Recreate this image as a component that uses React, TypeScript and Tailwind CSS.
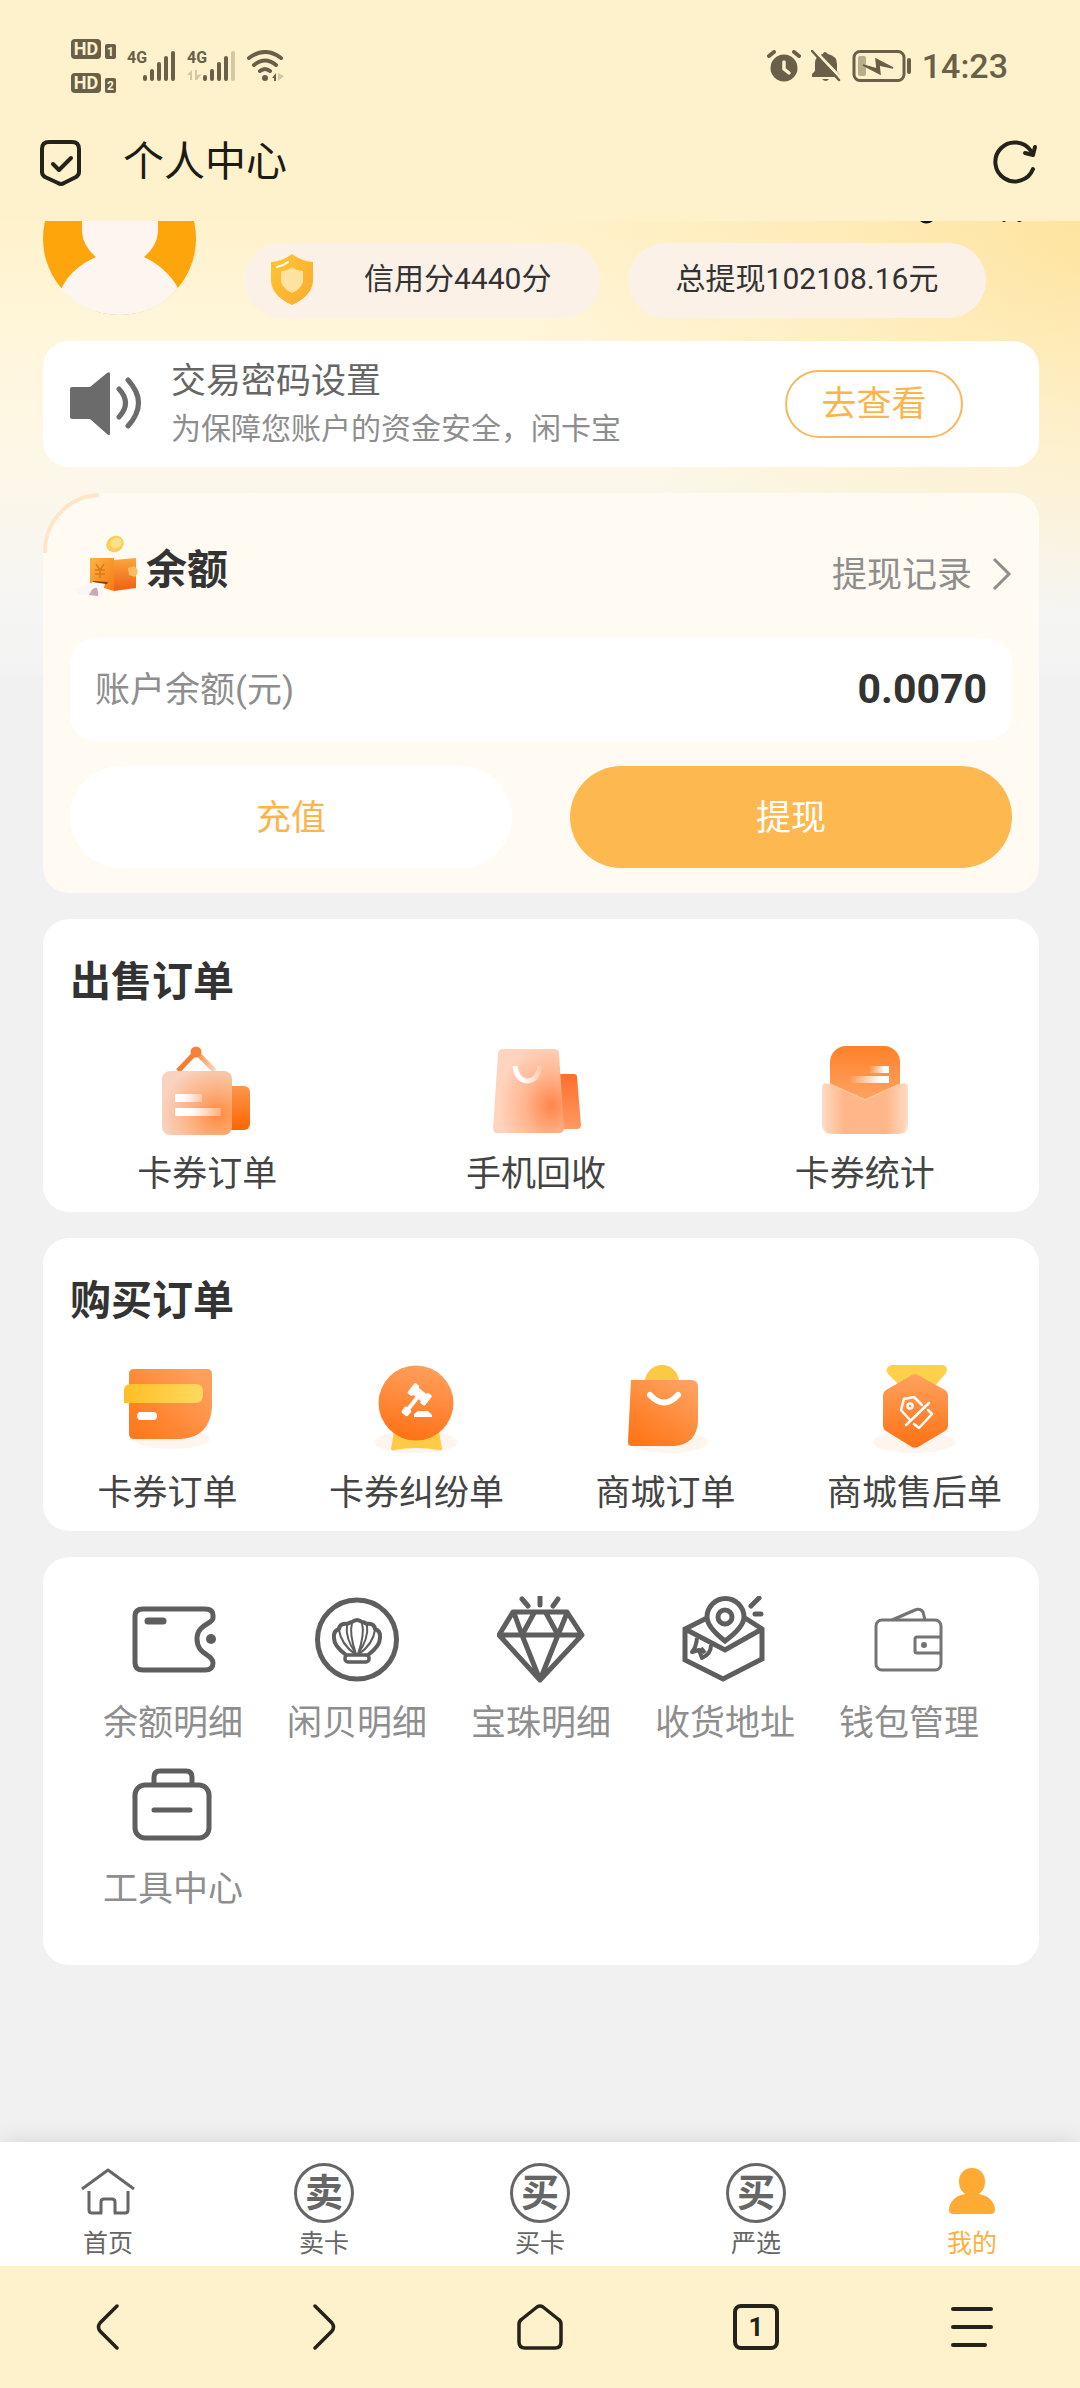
import React from "react";

const SpeakerIcon = () => (
  <svg width="72" height="66" viewBox="0 0 72 66" fill="none">
    <path d="M2 16H20L37 2Q40 0 40 3V62Q40 66 37 63L20 48H2Q0 48 0 46V18Q0 16 2 16Z" fill="#6b6b6b" />
    <path d="M49 18Q62 32 49 46M58 9Q79 32 58 55" stroke="#6b6b6b" strokeWidth="5" strokeLinecap="round" />
  </svg>
);

const Avatar = () => (
  <svg width="153" height="94" viewBox="0 59 153 94" className="shrink-0">
    <circle cx="76.500" cy="76.500" r="76.500" fill="#fea50b" />
    <path
      d="M39 59V70Q40 84 53 95Q28 106 18 127Q42 153 76.500 153Q112 153 135 126Q124 106 101 95Q114 84 115 70V59Z"
      fill="#fdf5ef"
    />
  </svg>
);

const CreditBadge = () => (
  <svg width="44" height="52" viewBox="0 0 44 52">
    <defs>
      <linearGradient id="badge" x1="0" y1="0" x2="1" y2="1">
        <stop offset="0" stopColor="#ffc62f" />
        <stop offset="1" stopColor="#fdaa33" />
      </linearGradient>
    </defs>
    <path d="M22 1Q31 8 43 9V28Q42 43 22 52Q2 43 1 28V9Q13 8 22 1Z" fill="url(#badge)" />
    <path d="M22 14Q27 18 33 18V29Q31 36 22 40Q13 36 11 29V18Q17 18 22 14Z" fill="#fee2a2" />
    <path d="M7 14Q13 13 18 9" stroke="#fff" strokeWidth="2" strokeLinecap="round" fill="none" />
  </svg>
);

const PurseIcon = () => (
  <svg width="68" height="64" viewBox="0 0 68 64">
    <defs>
      <linearGradient id="purse" x1="0" y1="0" x2="1" y2="1">
        <stop offset="0" stopColor="#fcb443" />
        <stop offset="1" stopColor="#f47a17" />
      </linearGradient>
      <linearGradient id="purseSide" x1="0" y1="0" x2="0" y2="1">
        <stop offset="0" stopColor="#fba63c" />
        <stop offset="1" stopColor="#ef5f13" />
      </linearGradient>
    </defs>
    <ellipse cx="42" cy="10" rx="9" ry="8" fill="#f9cf57" transform="rotate(-35 42 10)" />
    <ellipse cx="43" cy="9" rx="6" ry="5" fill="#fbe08a" transform="rotate(-35 43 9)" />
    <path d="M17 24H41V57L17 50Z" fill="url(#purse)" />
    <path d="M41 26L63 24V54L41 57Z" fill="url(#purseSide)" />
    <path d="M23 30L27 36L31 30M22 36H32M22 40H32M27 36V44" stroke="#dc7a17" strokeWidth="1.500" fill="none" />
    <path d="M55 34L61 32Q68 37 62 43L56 41Z" fill="#fcbd62" />
    <path d="M20 47L35 48L34 50L20 49Z" fill="#8e3d12" />
    <path d="M2 56L20 48L32 50L28 63L6 60Z" fill="#f8f6f8" />
    <path d="M16 61Q20 52 24 54Q26 58 25 62Z" fill="#c9abb0" />
  </svg>
);

const HangingSign = () => (
  <svg width="90" height="90" viewBox="0 0 90 90" fill="none">
    <defs>
      <linearGradient id="signRope" x1="14" y1="0" x2="55" y2="0" gradientUnits="userSpaceOnUse">
        <stop offset="0.400" stopColor="#fa7c30" />
        <stop offset="1" stopColor="#ffe0c8" />
      </linearGradient>
      <radialGradient id="signBody" cx="0.800" cy="0.680" r="0.800">
        <stop offset="0" stopColor="#ff8a3c" />
        <stop offset="0.500" stopColor="#fbb283" />
        <stop offset="1" stopColor="#f8d2bf" />
      </radialGradient>
      <linearGradient id="signBack" x1="0" y1="0" x2="0" y2="1">
        <stop offset="0" stopColor="#fb964c" />
        <stop offset="1" stopColor="#fd6500" />
      </linearGradient>
      <linearGradient id="signLine" x1="0" y1="0" x2="1" y2="0">
        <stop offset="0.300" stopColor="#fff" />
        <stop offset="1" stopColor="#fff" stopOpacity="0.300" />
      </linearGradient>
    </defs>
    <path d="M16 25L34 6L53 25" stroke="url(#signRope)" strokeWidth="5" />
    <circle cx="34" cy="6" r="5.500" fill="#f98038" />
    <rect x="55" y="40" width="33" height="44" rx="6" fill="url(#signBack)" />
    <rect x="0" y="25" width="70" height="64" rx="8" fill="url(#signBody)" />
    <rect x="13" y="48" width="27" height="8" rx="1" fill="url(#signLine)" />
    <rect x="13" y="62" width="46" height="8" rx="1" fill="url(#signLine)" />
  </svg>
);

const RecycleBag = () => (
  <svg width="90" height="90" viewBox="0 0 90 90" fill="none">
    <defs>
      <radialGradient id="recycleBody" cx="0.820" cy="0.680" r="0.750">
        <stop offset="0" stopColor="#ff8549" />
        <stop offset="0.500" stopColor="#ffb58f" />
        <stop offset="1" stopColor="#ffd4be" />
      </radialGradient>
      <linearGradient id="recycleBack" x1="0" y1="0" x2="0" y2="1">
        <stop offset="0" stopColor="#fd6f2c" />
        <stop offset="1" stopColor="#ff9a63" />
      </linearGradient>
      <linearGradient id="recycleSmile" x1="24" y1="0" x2="51" y2="0" gradientUnits="userSpaceOnUse">
        <stop offset="0.300" stopColor="#fff" />
        <stop offset="1" stopColor="#ffc7a6" />
      </linearGradient>
    </defs>
    <path d="M68 28H83Q86 28 86 31L90 79Q90 83 86 83H70Z" fill="url(#recycleBack)" />
    <path d="M12 3H63Q68 3 68 8L73 82Q73 87 68 87H6Q2 87 2 82L7 8Q7 3 12 3Z" fill="url(#recycleBody)" />
    <path d="M24 20Q26 35 37 35Q47 34 49 20" stroke="url(#recycleSmile)" strokeWidth="5" />
  </svg>
);

const StatsEnvelope = () => (
  <svg width="90" height="90" viewBox="0 0 90 90" fill="none">
    <defs>
      <linearGradient id="statCard" x1="0" y1="0" x2="0" y2="1">
        <stop offset="0" stopColor="#fe8128" />
        <stop offset="1" stopColor="#ffa76a" />
      </linearGradient>
      <linearGradient id="statPocket" x1="0" y1="0" x2="1" y2="0">
        <stop offset="0" stopColor="#ffdcc6" />
        <stop offset="0.250" stopColor="#ffb789" />
        <stop offset="0.750" stopColor="#ffb789" />
        <stop offset="1" stopColor="#ffdcc6" />
      </linearGradient>
      <linearGradient id="statLine" x1="0" y1="0" x2="1" y2="0">
        <stop offset="0" stopColor="#fff" stopOpacity="0" />
        <stop offset="0.800" stopColor="#fff" />
      </linearGradient>
    </defs>
    <rect x="10" y="0" width="70" height="60" rx="16" fill="url(#statCard)" />
    <rect x="49" y="20" width="20" height="7" fill="url(#statLine)" />
    <rect x="29" y="30" width="40" height="7" fill="url(#statLine)" />
    <path d="M2 40Q3 36 10 38L45 54L80 38Q87 36 88 40V78Q88 88 78 88H12Q2 88 2 78Z" fill="url(#statPocket)" />
    <path d="M10 38L45 54L80 38" stroke="#ffc79c" strokeWidth="1.500" />
  </svg>
);

const CardOrder = () => (
  <svg width="90" height="90" viewBox="0 0 90 90" fill="none">
    <defs>
      <linearGradient id="cardBody" x1="0.200" y1="1" x2="1" y2="0.300">
        <stop offset="0" stopColor="#ff7a1e" />
        <stop offset="1" stopColor="#ff9f5c" />
      </linearGradient>
      <linearGradient id="cardStripe" x1="0" y1="0" x2="1" y2="0">
        <stop offset="0" stopColor="#ffbe26" />
        <stop offset="1" stopColor="#ffd95f" />
      </linearGradient>
    </defs>
    <ellipse cx="49" cy="74" rx="38" ry="10" fill="#fff5ef" />
    <path d="M11 4H84Q89 4 89 9V42Q87 72 58 74H11Q6 74 6 69V9Q6 4 11 4Z" fill="url(#cardBody)" />
    <path d="M7 19H73Q80 19 80 27V31Q79 38 73 38H1V25Q1 20 7 19Z" fill="url(#cardStripe)" />
    <rect x="14" y="47" width="20" height="8" rx="4" fill="#fff" />
  </svg>
);

const DisputeGavel = () => (
  <svg width="90" height="90" viewBox="0 0 90 90" fill="none">
    <defs>
      <linearGradient id="gavelDisc" x1="0.600" y1="0" x2="0.400" y2="1">
        <stop offset="0" stopColor="#ffa05c" />
        <stop offset="1" stopColor="#ff7115" />
      </linearGradient>
    </defs>
    <ellipse cx="44" cy="77" rx="42" ry="11" fill="#fff5ef" />
    <path d="M22 66H67L70 84Q70 86 67 85Q44 81 22 85Q19 86 19 84Z" fill="#ffca45" />
    <circle cx="44" cy="38" r="37.500" fill="url(#gavelDisc)" />
    <g fill="#fff" transform="rotate(38 48 29)">
      <rect x="40" y="25" width="16" height="9" />
      <rect x="37" y="23" width="6" height="13" rx="1.500" />
      <rect x="53" y="23" width="6" height="13" rx="1.500" />
      <rect x="46" y="33" width="4" height="17" />
      <rect x="44" y="47" width="8" height="8" rx="2" />
    </g>
    <path d="M46 46H56L60 50V52H42V49Z" fill="#fff" />
  </svg>
);

const MallBag = () => (
  <svg width="90" height="90" viewBox="0 0 90 90" fill="none">
    <defs>
      <linearGradient id="mallBag" x1="0.300" y1="1" x2="0.900" y2="0.100">
        <stop offset="0" stopColor="#ff7719" />
        <stop offset="1" stopColor="#ffa15e" />
      </linearGradient>
    </defs>
    <ellipse cx="48" cy="77" rx="39" ry="11" fill="#fff5ef" />
    <circle cx="41" cy="17" r="17" fill="#fcc945" />
    <path d="M10 15H70Q77 15 77 22V56Q76 79 53 81H11Q7 81 7 77Z" fill="url(#mallBag)" />
    <path d="M29 30Q43 45 57 30" stroke="#fff" strokeWidth="6" strokeLinecap="round" />
  </svg>
);

const AfterSaleMedal = () => (
  <svg width="90" height="90" viewBox="0 0 90 90" fill="none">
    <defs>
      <linearGradient id="medal" x1="0" y1="0" x2="0" y2="1">
        <stop offset="0" stopColor="#ffa25f" />
        <stop offset="1" stopColor="#ff7113" />
      </linearGradient>
    </defs>
    <ellipse cx="44" cy="77" rx="41" ry="11" fill="#fff5ef" />
    <path d="M21 0H73Q79 2 76 8L64 22H31L18 9Q14 3 21 0Z" fill="#ffd04c" />
    <path
      d="M42 10Q45 8 48 10L75 25Q78 27 78 30V61Q78 64 75 66L48 82Q45 83 42 82L16 66Q13 64 13 61V30Q13 27 16 25Z"
      fill="url(#medal)"
    />
    <g stroke="#fff" strokeWidth="2.500" strokeLinecap="round" strokeLinejoin="round">
      <path d="M52 40L44 32L34 34L31 45L39 54M59 38L36 60M58 45L62 49L49 63L44 59" />
      <circle cx="40" cy="41" r="2.500" />
    </g>
  </svg>
);

const BalanceIcon = () => (
  <svg width="88" height="88" viewBox="0 0 88 88" fill="none" stroke="#5e5e5e" strokeWidth="5" strokeLinecap="round">
    <path d="M14 13H76Q84 13 84 19V22C84 28 68 28 68 43C68 59 84 58 84 67Q84 74 76 74H14Q6 74 6 67V20Q6 13 14 13Z" />
    <path d="M19 25H34" strokeWidth="7" />
    <circle cx="82" cy="43" r="5" fill="#5e5e5e" stroke="none" />
  </svg>
);

const ShellIcon = () => (
  <svg width="88" height="88" viewBox="0 0 88 88" fill="none" stroke="#5e5e5e" strokeLinecap="round" strokeLinejoin="round">
    <circle cx="44" cy="43.500" r="39.500" strokeWidth="5" />
    <path
      d="M33 59Q21 50 21 42Q20 35 26 33Q27 27 34 28Q38 26 39 26Q44 22 49 26Q51 26 54 28Q61 27 62 33Q68 35 67 42Q67 50 55 59"
      strokeWidth="4"
    />
    <path d="M42 58Q28 48 26 34M43 58Q32 42 34 29M43 58Q36 38 39 27M45 58Q52 38 49 27M45 58Q56 42 54 29M46 58Q60 48 62 34" strokeWidth="2" />
    <rect x="32" y="59" width="24" height="7" rx="3" strokeWidth="3.500" />
  </svg>
);

const DiamondIcon = () => (
  <svg width="88" height="88" viewBox="0 0 88 88" fill="none" stroke="#5e5e5e" strokeWidth="5">
    <path d="M16 16H70L85 39L43 84L2 39ZM2 39H85M17 17L25 39L37 17M49 17L61 39L70 17M25 39L43 84L61 39" strokeLinejoin="round" />
    <path d="M25 3L31 10M43 1V9M61 3L56 10" strokeLinecap="round" />
  </svg>
);

const AddressIcon = () => (
  <svg width="88" height="88" viewBox="0 0 88 88" fill="none" stroke="#5e5e5e" strokeWidth="5">
    <path d="M26 22L4 33V64L42 83L81 63V33L64 22M4 33L44 54L81 33" />
    <path d="M44 45Q26 31 26 21A18 18 0 0 1 63 21Q63 31 44 45Z" />
    <circle cx="44" cy="21" r="7" />
    <path d="M16 42Q15 52 11 56L18 54L21 62Q30 58 30 49M20 52L24 57" strokeWidth="4" strokeLinejoin="round" />
    <path d="M78 2L70 10M74 18H80" strokeLinecap="round" />
  </svg>
);

const WalletIcon = () => (
  <svg width="88" height="88" viewBox="0 0 88 88" fill="none" stroke="#747474" strokeWidth="3">
    <rect x="11" y="24" width="65" height="50" rx="6" />
    <path d="M27 24L50 14Q55 12 58 16L60 24M76 41H52Q50 41 50 43V55Q50 57 52 57H76" />
    <circle cx="59" cy="49" r="3" fill="#747474" stroke="none" />
  </svg>
);

const ToolboxIcon = () => (
  <svg width="88" height="88" viewBox="0 0 88 88" fill="none" stroke="#5e5e5e" strokeWidth="5" strokeLinecap="round">
    <rect x="6" y="23" width="74" height="53" rx="10" />
    <path d="M25 22V15Q25 9 31 9H57Q63 9 63 15V22M25 48H61" />
  </svg>
);

const sellOrders = [
  { label: "卡券订单", icon: <HangingSign /> },
  { label: "手机回收", icon: <RecycleBag /> },
  { label: "卡券统计", icon: <StatsEnvelope /> },
];

const buyOrders = [
  { label: "卡券订单", icon: <CardOrder /> },
  { label: "卡券纠纷单", icon: <DisputeGavel /> },
  { label: "商城订单", icon: <MallBag /> },
  { label: "商城售后单", icon: <AfterSaleMedal /> },
];

const tools = [
  { label: "余额明细", icon: <BalanceIcon /> },
  { label: "闲贝明细", icon: <ShellIcon /> },
  { label: "宝珠明细", icon: <DiamondIcon /> },
  { label: "收货地址", icon: <AddressIcon /> },
  { label: "钱包管理", icon: <WalletIcon /> },
  { label: "工具中心", icon: <ToolboxIcon /> },
];

const CircleGlyph = ({ char }: { char: string }) => (
  <span className="flex size-[60px] items-center justify-center rounded-full border-3 border-[#666] text-[38px] leading-none font-bold">
    {char}
  </span>
);

const tabs = [
  {
    label: "首页",
    icon: (
      <svg width="60" height="60" viewBox="0 0 60 60" fill="none" stroke="#666" strokeWidth="3" strokeLinejoin="round">
        <path d="M4 26L30 7L56 26M11 28V47Q11 50 14 50H23V39Q23 36 26 36H34Q37 36 37 39V50H47Q50 50 50 47V28" />
      </svg>
    ),
  },
  { label: "卖卡", icon: <CircleGlyph char="卖" /> },
  { label: "买卡", icon: <CircleGlyph char="买" /> },
  { label: "严选", icon: <CircleGlyph char="买" /> },
  {
    label: "我的",
    active: true,
    icon: (
      <svg width="60" height="60" viewBox="0 0 60 60" fill="#feaa33">
        <path d="M30 5C38 5 43 11 43 18C43 24 41 28 37 31C48 33 53 40 53 47Q53 51 48 51H12Q7 51 7 47C7 40 12 33 23 31C19 28 17 24 17 18C17 11 22 5 30 5Z" />
      </svg>
    ),
  },
];

const SignalBars = ({ weak }: { weak?: boolean }) => (
  <svg width="49" height="32" viewBox="0 0 49 32" fill="#6a5f48">
    {weak && <path d="M0 25L5 20V30H3V25ZM8 20H10V25L15 24L10 30H8Z" fill="#d3c8a4" />}
    <rect x="16" y="25" width="4" height="6" rx="2" />
    <rect x="23" y="19" width="4" height="12" rx="2" />
    <rect x="30" y="12" width="4" height="19" rx="2" />
    <rect x="37" y="6" width="4" height="25" rx="2" />
    <rect x="44" y="1" width="4" height="30" rx="2" fill={weak ? "#d3c8a4" : "#6a5f48"} />
  </svg>
);

const Network = ({ weak }: { weak?: boolean }) => (
  <div className="relative">
    <span className="absolute top-0 left-0 text-base leading-4 font-bold">4G</span>
    <SignalBars weak={weak} />
  </div>
);

const HdBadge = ({ sim }: { sim: number }) => (
  <div className="flex items-end gap-1">
    <span className="flex h-5 w-[30px] items-center justify-center rounded-sm bg-[#6a5f48] text-lg leading-none font-bold text-[#fef2cc]">
      HD
    </span>
    <span className="flex h-[15px] w-[11px] items-center justify-center rounded-xs bg-[#6a5f48] text-xs leading-none font-bold text-[#fef2cc]">
      {sim}
    </span>
  </div>
);

const StatusBar = () => (
  <div className="flex h-[76px] items-center justify-between pr-[72px] pl-[71px] text-[#6a5f48]">
    <div className="flex items-center gap-[11px]">
      <div className="flex flex-col gap-[14px]">
        <HdBadge sim={1} />
        <HdBadge sim={2} />
      </div>
      <Network />
      <Network weak />
      <svg width="38" height="32" viewBox="0 0 38 32" fill="none" stroke="#6a5f48" strokeWidth="4" strokeLinecap="round">
        <path d="M2 8Q18 -4 34 8M7 15Q18 6 29 15M13 21Q18 17 23 21" />
        <circle cx="18" cy="28" r="3" fill="#6a5f48" stroke="none" />
        <path d="M25 28L29 23V31H27V28Z" fill="#6a5f48" stroke="none" />
        <path d="M31 23V31L37 26Z" fill="#d3c8a4" stroke="none" />
      </svg>
    </div>
    <div className="flex items-center gap-[10px]">
      <svg width="34" height="32" viewBox="0 0 34 32" fill="none" strokeLinecap="round">
        <circle cx="17" cy="18" r="13.500" fill="#6a5f48" />
        <path d="M2 6L7 2M32 6L27 2" stroke="#6a5f48" strokeWidth="4" />
        <path d="M17 12V19L22 23" stroke="#fef2cc" strokeWidth="3.500" />
      </svg>
      <svg width="30" height="32" viewBox="0 0 30 32">
        <path d="M1 27V24L4 21V13Q4 6 12 4Q13 0 17 4Q26 6 26 14V21L29 25V27ZM11 29H18Q15 33 11 29Z" fill="#6a5f48" />
        <path d="M3 0L31 29" stroke="#fef2cc" strokeWidth="3" />
        <path d="M1 1L28 30" stroke="#6a5f48" strokeWidth="2.500" strokeLinecap="round" />
      </svg>
      <svg width="61" height="32" viewBox="0 0 61 32" fill="none">
        <rect x="3" y="1.500" width="50" height="29" rx="6" stroke="#6a5f48" strokeWidth="3" />
        <rect x="7" y="6" width="8" height="20" rx="2" fill="#b9ae8c" />
        <path d="M12 15L26 19L25 9L42 18L28 15L29 24Z" fill="#6a5f48" stroke="#6a5f48" strokeWidth="1.500" />
        <rect x="56" y="8" width="4" height="16" rx="2" fill="#6a5f48" />
      </svg>
      <span className="text-[34px] leading-none font-medium">14:23</span>
    </div>
  </div>
);

const SectionCard = ({ title, children }: { title: string; children: React.ReactNode }) => (
  <section className="rounded-[26px] bg-white pt-[33px] pb-[13px]">
    <h2 className="px-[27px] text-[41px] leading-[60px] font-bold text-[#333]">{title}</h2>
    <div className="mt-[34px] flex">{children}</div>
  </section>
);

const OrderLink = ({ item, width }: { item: { label: string; icon: React.ReactNode }; width: string }) => (
  <a href="#" className={`flex flex-col items-center gap-[15px] ${width}`}>
    {item.icon}
    <span className="text-[35px] leading-12 whitespace-nowrap text-[#444]">{item.label}</span>
  </a>
);

const App = () => {
  return (
    <div className="flex min-h-screen flex-col bg-[#f1f1f1] font-[Roboto,'Noto_Sans_CJK_SC',sans-serif]">
      {/* Browser header */}
      <header className="bg-[#fef2cc] pt-7">
        <StatusBar />
        <div className="flex h-[117px] items-center pr-[42px] pl-[39px]">
          <svg width="44" height="48" viewBox="0 0 44 48" fill="none" stroke="#25221a" strokeWidth="4" strokeLinecap="round" strokeLinejoin="round">
            <path d="M10 3H33Q40 3 40 10V33Q40 36 37 38L25 44Q22 46 19 44L6 38Q3 36 3 33V10Q3 3 10 3Z" />
            <path d="M14 25L20 31L32 19" />
          </svg>
          <h1 className="ml-10 flex-1 text-[41px] leading-none text-[#1d1b14]">个人中心</h1>
          <button aria-label="刷新">
            <svg width="46" height="46" viewBox="0 0 46 46" fill="none" stroke="#25221a" strokeWidth="4" strokeLinecap="round" strokeLinejoin="round">
              <path d="M41 29A19.500 19.500 0 1 1 39 11" />
              <path d="M43 7L41 15L33 13" />
            </svg>
          </button>
        </div>
      </header>

      <main className="flex-1 bg-[image:radial-gradient(ellipse_620px_400px_at_104%_0%,rgba(253,218,130,0.65),rgba(253,225,150,0.35)_50%,transparent),linear-gradient(#fff2cc,#fff6dc_28%,#fcf7e8_55%,#f5f5f4_85%,#f3f3f3)] bg-[length:100%_455px] bg-no-repeat pr-[41px] pb-6 pl-[43px]">
        {/* Profile, scrolled partly under the header */}
        <div className="relative flex h-[120px]">
          <Avatar />
          <div className="mt-[22px] ml-12 flex h-[75px] gap-7 text-[30px] whitespace-nowrap text-[#333]">
            <div className="flex w-[356px] items-center rounded-full bg-[#fbf1e7] pb-1 pl-[26px]">
              <CreditBadge />
              <span className="ml-[50px]">信用分4440分</span>
            </div>
            <div className="flex w-[358px] items-center justify-center rounded-full bg-[#fbf1e7] pb-1">总提现102108.16元</div>
          </div>
          <svg className="absolute top-0 right-[14px]" width="106" height="4" viewBox="0 0 106 4">
            <path d="M1 0H14Q7 5 1 0ZM83 0H87Q85 2 83 0ZM98 0H103Q100 2 98 0Z" fill="#111" />
          </svg>
        </div>

        <div className="flex flex-col gap-[26px]">
          <section className="flex h-[126px] items-center rounded-[26px] bg-white pr-[76px] pl-[27px]">
            <SpeakerIcon />
            <div className="ml-[29px] flex-1 whitespace-nowrap">
              <h2 className="pt-[2px] text-[35px] leading-12 text-[#666]">交易密码设置</h2>
              <p className="text-[30px] leading-[46px] text-[#8e8e8e]">为保障您账户的资金安全，闲卡宝</p>
            </div>
            <button className="h-[68px] w-[178px] rounded-full border-2 border-[#fbb75c] text-[35px] leading-none text-[#fdb54a]">
              去查看
            </button>
          </section>

          {/* Balance */}
          <section className="relative rounded-[26px] rounded-tl-[56px] bg-[#fffaf2] px-[27px] pb-[25px]">
            <svg className="absolute top-0 left-0" width="60" height="66" viewBox="0 0 60 66" fill="none">
              <path d="M2 60A56 56 0 0 1 56 2" stroke="#ffe6cb" strokeWidth="4" />
            </svg>
            <div className="flex h-[145px] items-center pl-[3px]">
              <PurseIcon />
              <h2 className="ml-[5px] flex-1 pt-2 text-[41px] leading-[60px] font-bold text-[#333]">余额</h2>
              <a href="#" className="flex items-center gap-5 pt-4 text-[35px] leading-12 text-[#8e8e8e]">
                <span className="pt-1">提现记录</span>
                <svg width="20" height="34" viewBox="0 0 20 34" fill="none" stroke="#8e8e8e" strokeWidth="3">
                  <path d="M2 2L17 17L2 32" />
                </svg>
              </a>
            </div>
            <div className="flex h-[103px] items-center justify-between rounded-[26px] bg-white px-[25px]">
              <span className="pt-1 text-[35px] text-[#8e8e8e]">账户余额(元)</span>
              <span className="text-[41px] font-bold text-[#333]">0.0070</span>
            </div>
            <div className="mt-[25px] grid grid-cols-2 gap-[58px] text-[35px]">
              <button className="h-[102px] rounded-full bg-white pt-1 text-[#fdb54a]">充值</button>
              <button className="h-[102px] rounded-full bg-[#feb850] pt-1 text-white">提现</button>
            </div>
          </section>

          <SectionCard title="出售订单">
            {sellOrders.map((item) => (
              <OrderLink key={item.label} item={item} width="w-[33%]" />
            ))}
          </SectionCard>

          <SectionCard title="购买订单">
            {buyOrders.map((item) => (
              <OrderLink key={item.label} item={item} width="w-1/4" />
            ))}
          </SectionCard>

          <section className="grid grid-cols-5 gap-y-[14px] rounded-[26px] bg-white px-[38px] pt-[39px] pb-[51px]">
            {tools.map((item) => (
              <a key={item.label} href="#" className="flex flex-col items-center gap-4">
                {item.icon}
                <span className="text-[35px] leading-12 whitespace-nowrap text-[#8e8e8e]">{item.label}</span>
              </a>
            ))}
          </section>
        </div>
      </main>

      {/* App tabs */}
      <nav className="relative grid h-[124px] grid-cols-5 bg-white pt-[21px] shadow-[0_0_24px_rgba(0,0,0,0.12)]">
        {tabs.map((tab) => (
          <a
            key={tab.label}
            href="#"
            className={`flex flex-col items-center ${tab.active ? "text-[#feb040]" : "text-[#666]"}`}
          >
            {tab.icon}
            <span className="text-[25px] leading-[42px]">{tab.label}</span>
          </a>
        ))}
      </nav>

      {/* Browser toolbar */}
      <footer className="relative grid h-[122px] grid-cols-5 place-items-center bg-[#fef2cc] text-[#25221a]">
        <button aria-label="后退">
          <svg width="24" height="48" viewBox="0 0 24 48" fill="none" stroke="currentColor" strokeWidth="3.500" strokeLinecap="round">
            <path d="M21 3L4 20Q1 24 4 28L21 45" />
          </svg>
        </button>
        <button aria-label="前进">
          <svg width="24" height="48" viewBox="0 0 24 48" fill="none" stroke="currentColor" strokeWidth="3.500" strokeLinecap="round">
            <path d="M3 3L20 20Q23 24 20 28L3 45" />
          </svg>
        </button>
        <button aria-label="主页">
          <svg width="46" height="48" viewBox="0 0 46 48" fill="none" stroke="currentColor" strokeWidth="3.500" strokeLinejoin="round">
            <path d="M20 4Q23 2 26 4L41 16Q44 18 44 21V39Q44 45 38 45H8Q2 45 2 39V21Q2 18 5 16Z" />
          </svg>
        </button>
        <button className="flex size-[46px] items-center justify-center rounded-lg border-4 border-[#25221a] text-[26px] leading-none font-bold">
          1
        </button>
        <button aria-label="菜单">
          <svg width="44" height="44" viewBox="0 0 44 44" stroke="currentColor" strokeWidth="4" strokeLinecap="round">
            <path d="M3 4H41M3 22H41M3 40H35" />
          </svg>
        </button>
      </footer>
    </div>
  );
};

export default App;
